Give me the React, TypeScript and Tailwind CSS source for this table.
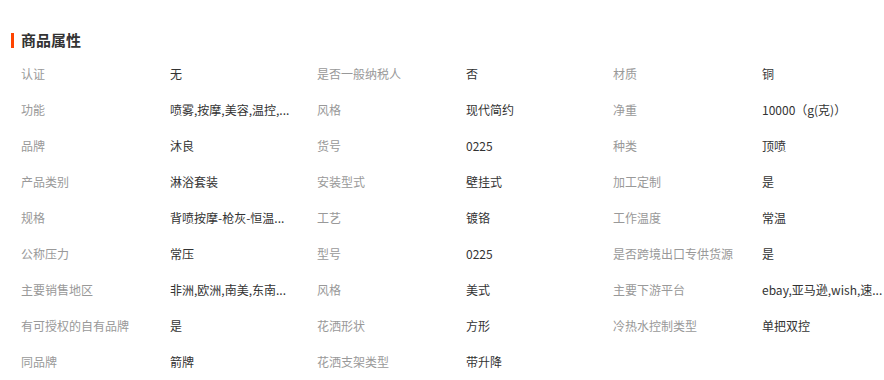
const rows: [string, string][][] = [
  [["认证", "无"], ["是否一般纳税人", "否"], ["材质", "铜"]],
  [["功能", "喷雾,按摩,美容,温控,..."], ["风格", "现代简约"], ["净重", "10000（g(克)）"]],
  [["品牌", "沐良"], ["货号", "0225"], ["种类", "顶喷"]],
  [["产品类别", "淋浴套装"], ["安装型式", "壁挂式"], ["加工定制", "是"]],
  [["规格", "背喷按摩-枪灰-恒温..."], ["工艺", "镀铬"], ["工作温度", "常温"]],
  [["公称压力", "常压"], ["型号", "0225"], ["是否跨境出口专供货源", "是"]],
  [["主要销售地区", "非洲,欧洲,南美,东南..."], ["风格", "美式"], ["主要下游平台", "ebay,亚马逊,wish,速..."]],
  [["有可授权的自有品牌", "是"], ["花洒形状", "方形"], ["冷热水控制类型", "单把双控"]],
  [["同品牌", "箭牌"], ["花洒支架类型", "带升降"]],
]

export default function App() {
  return (
    <div
      className="w-[884px] h-[380px] overflow-hidden bg-white pl-[11px] pt-[32px]"
      style={{ fontFamily: '"Microsoft YaHei", "Noto Sans CJK SC", "Noto Sans", sans-serif' }}
    >
      {/* 标题 */}
      <div className="flex items-center h-[16px]">
        <span className="w-[3px] h-[15px] bg-[#ff4400]" />
        <h2 className="ml-[7px] text-[15px] leading-[16px] font-bold text-[#333]">商品属性</h2>
      </div>

      {/* 属性表 */}
      <div className="mt-[8px] pl-[10px]">
        {rows.map((row, i) => (
          <div key={i} className="flex h-9 items-center text-[12px]">
            {row.map(([label, value], j) => (
              <div key={j} className="flex">
                <div className="w-[149px] text-[#999] whitespace-nowrap">{label}</div>
                <div className={`${j === 2 ? "w-[122px]" : "w-[147px]"} text-[#333] whitespace-nowrap`}>{value}</div>
              </div>
            ))}
          </div>
        ))}
      </div>
    </div>
  )
}
